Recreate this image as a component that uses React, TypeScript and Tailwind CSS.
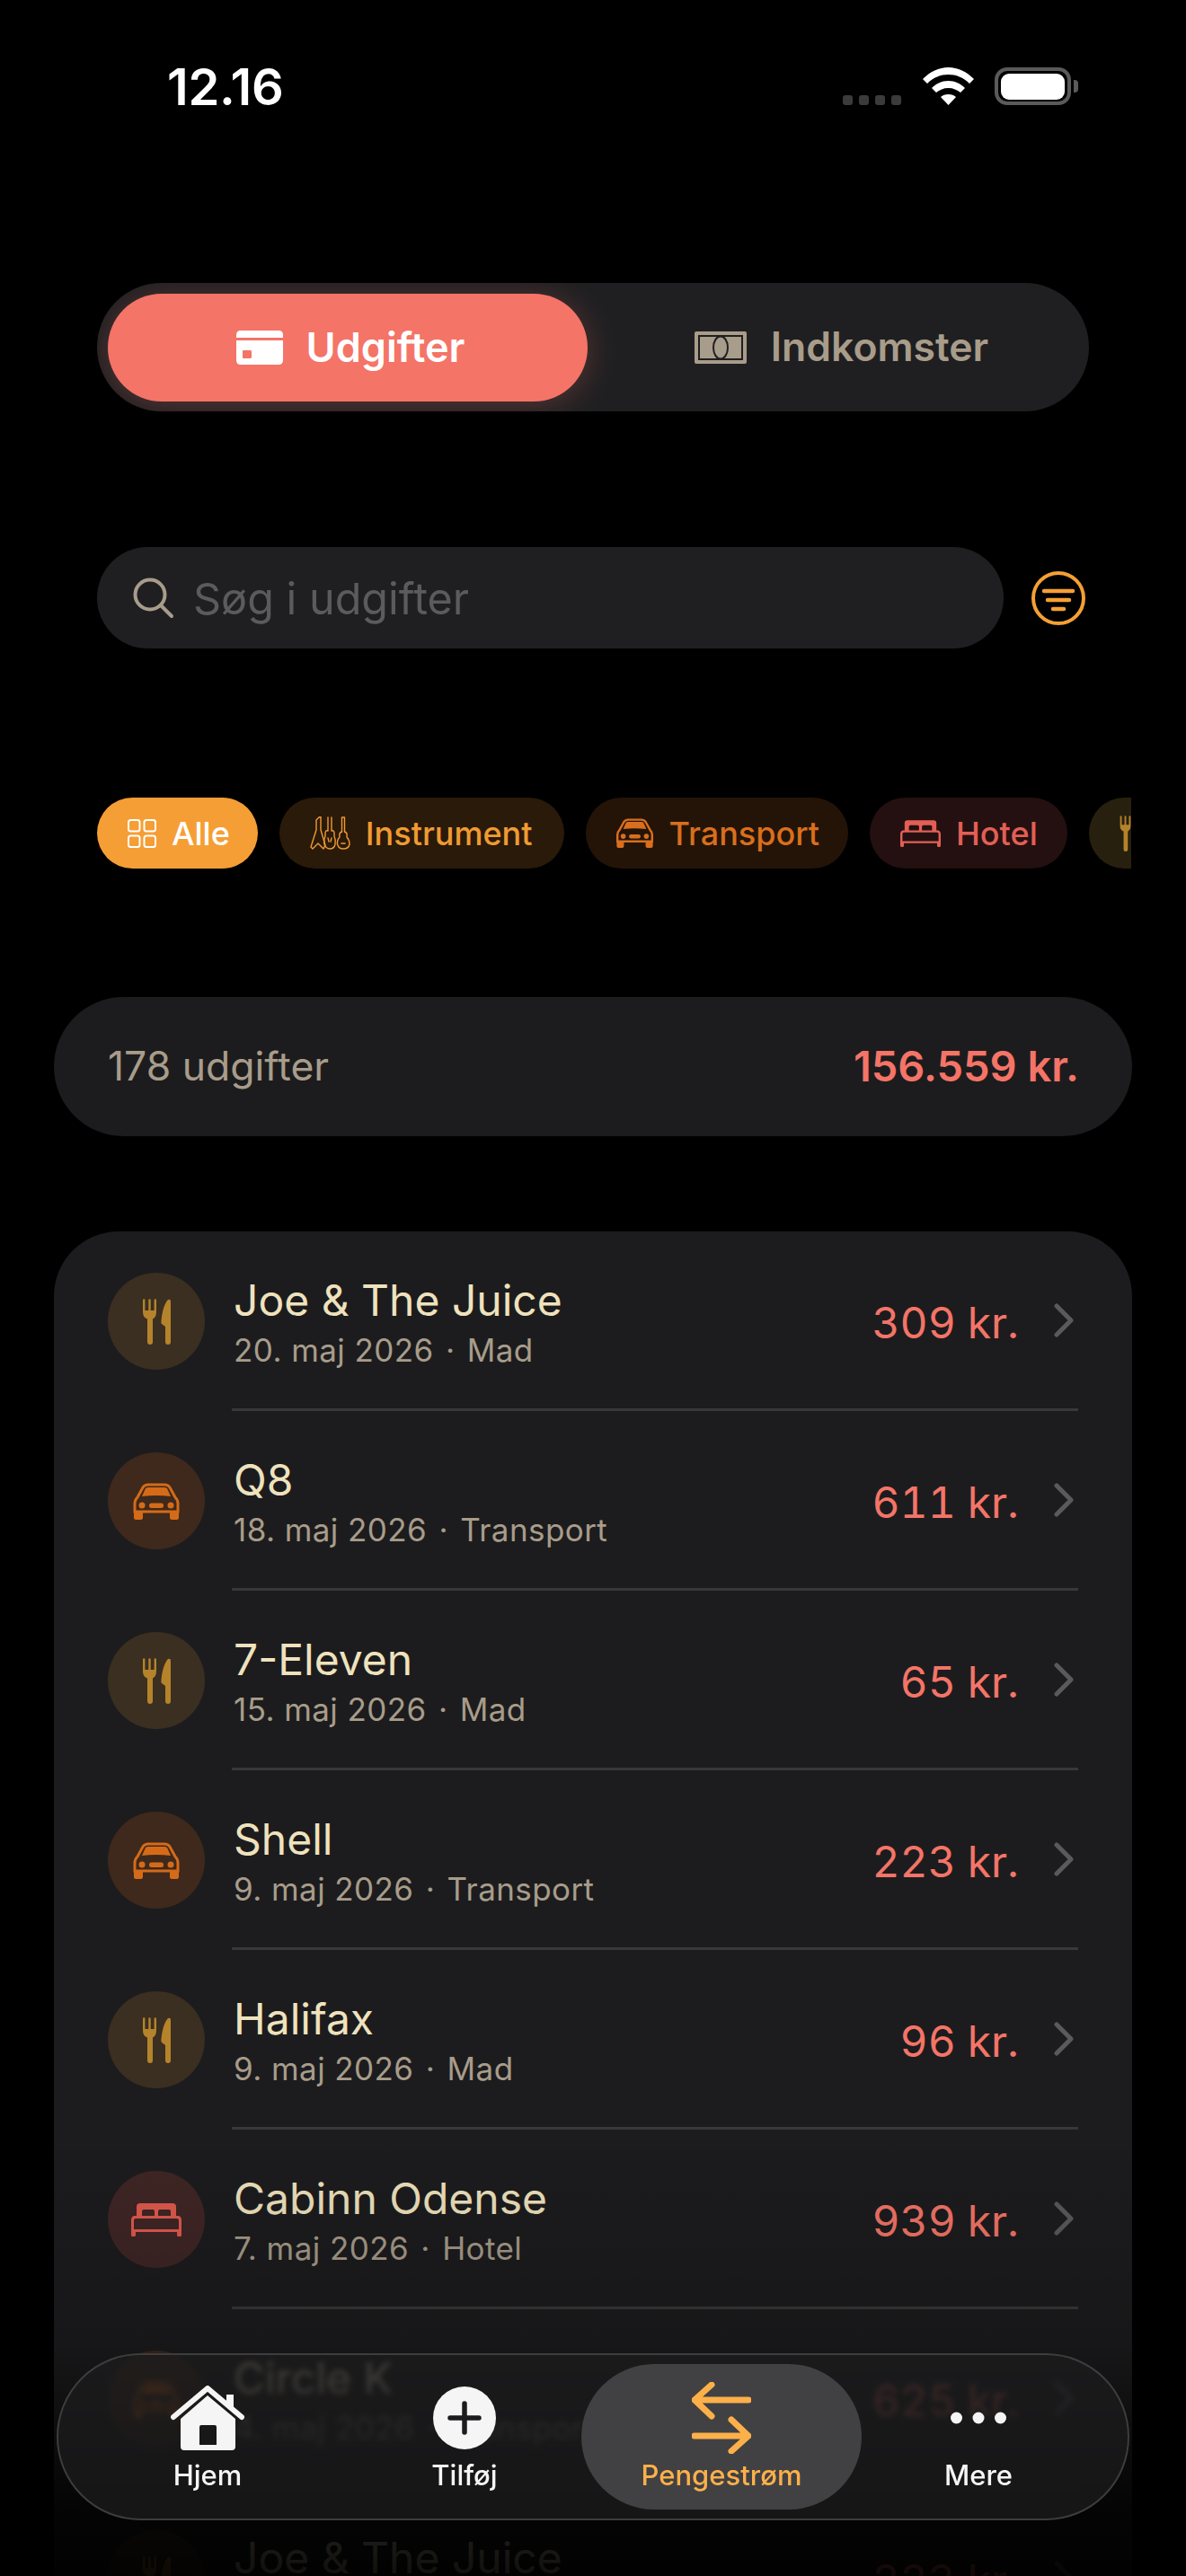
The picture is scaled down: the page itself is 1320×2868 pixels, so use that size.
import React from "react";

type IconProps = { w: number; h: number; c: string };

const Fork = ({ w, h, c }: IconProps) => (
  <svg width={w} height={h} viewBox="0 0 15 51" fill={c}>
    <path d="M0 1.5a1.2 1.2 0 0 1 2.4 0V13H6.3V1.5a1.2 1.2 0 0 1 2.4 0V13h3.9V1.5a1.2 1.2 0 0 1 2.4 0V15c0 4-2 6.5-4 7.5V48a3 3 0 0 1-6 0V22.5c-3-1-5-3.5-5-7.5Z" />
  </svg>
);

const ForkKnife = ({ w, h, c }: IconProps) => (
  <svg width={w} height={h} viewBox="0 0 31 51" fill={c}>
    <path d="M0 1.5a1.2 1.2 0 0 1 2.4 0V13H6.3V1.5a1.2 1.2 0 0 1 2.4 0V13h3.9V1.5a1.2 1.2 0 0 1 2.4 0V15c0 4-2 6.5-4 7.5V48a3 3 0 0 1-6 0V22.5c-3-1-5-3.5-5-7.5Z" />
    <path d="M28 1Q31 0 31 3V48a3 3 0 0 1-6 0V31L21 28Q20 27 20.5 24C21.5 14 24 5 28 1Z" />
  </svg>
);

const Car = ({ w, h, c }: IconProps) => (
  <svg width={w} height={h} viewBox="0 0 52 41" fill={c}>
    <path d="M5 16 11 5Q13 2 17 2H35Q39 2 41 5L47 16Q50 19 50 23V32H2V23Q2 19 5 16Z" fill="none" stroke={c} strokeWidth="3" />
    <path d="M10 15 14 6Q15 5 17 5H35Q37 5 38 6L42 15Q26 13 10 15Z" />
    <circle cx="10" cy="25" r="3.5" />
    <circle cx="42" cy="25" r="3.5" />
    <rect x="18" y="22.5" width="16" height="5.5" rx="2.5" />
    <rect x="1" y="31" width="10" height="10" rx="2.5" />
    <rect x="41" y="31" width="10" height="10" rx="2.5" />
  </svg>
);

const Bed = ({ w, h, c }: IconProps) => (
  <svg width={w} height={h} viewBox="0 0 56 37" fill={c} fillRule="evenodd">
    <path d="M10 0H46Q50 0 50 4V14H53Q56 15 56 19V35a2 2 0 0 1-5 0V32H5V35a2 2 0 0 1-5 0V19Q0 15 3 14H6V4Q6 0 10 0ZM14 7Q12 7 12 9V14H26V9Q26 7 24 7ZM32 7Q30 7 30 9V14H44V9Q44 7 42 7ZM5 17Q3 17 3 19V29H53V19Q53 17 51 17Z" />
  </svg>
);

const Guitars = ({ w, h, c }: IconProps) => (
  <svg width={w} height={h} viewBox="0 0 45 37" fill="none" stroke={c} strokeWidth="1.4" strokeLinejoin="round" strokeLinecap="round">
    <path d="M10 1 7 4V15L1 34 3 36 9 30 15 36 17 32 12 15V0Z" />
    <path d="M20 1V16M24 1V16M20 16Q17 15 17 19V22Q15 26 16 31 18 36 22 36 27 36 28 31 29 26 27 22V19Q27 15 24 16" />
    <path d="M20 24 21 28M24 24 23 28" />
    <path d="M35.5 1H38.5V17M35.5 1V17" />
    <path d="M35.5 17Q32 18 33 23 30 26 30.5 31 32 36 37 36 43 36 44 31 44 26 41 23 42 18 38.5 17" />
    <path d="M35 30H39" strokeWidth="1.6" />
  </svg>
);

const Grid = ({ w, h, c }: IconProps) => (
  <svg width={w} height={h} viewBox="0 0 32 32" fill="none" stroke={c} strokeWidth="2">
    <rect x="1" y="1" width="12.5" height="12.5" rx="2.5" />
    <rect x="18.5" y="1" width="12.5" height="12.5" rx="2.5" />
    <rect x="1" y="18.5" width="12.5" height="12.5" rx="2.5" />
    <rect x="18.5" y="18.5" width="12.5" height="12.5" rx="2.5" />
  </svg>
);

const cats = {
  Mad: { Icon: ForkKnife, color: "#b5832c", bg: "bg-[#3a2f20]", w: 31, h: 51 },
  Transport: { Icon: Car, color: "#d56b18", bg: "bg-[#3e291c]", w: 52, h: 41 },
  Hotel: { Icon: Bed, color: "#e05a4e", bg: "bg-[#3f2625]", w: 56, h: 37 },
};

const rows: { name: string; date?: string; cat: keyof typeof cats; amount: number }[] = [
  { name: "Joe & The Juice", date: "20. maj 2026", cat: "Mad", amount: 309 },
  { name: "Q8", date: "18. maj 2026", cat: "Transport", amount: 611 },
  { name: "7-Eleven", date: "15. maj 2026", cat: "Mad", amount: 65 },
  { name: "Shell", date: "9. maj 2026", cat: "Transport", amount: 223 },
  { name: "Halifax", date: "9. maj 2026", cat: "Mad", amount: 96 },
  { name: "Cabinn Odense", date: "7. maj 2026", cat: "Hotel", amount: 939 },
  { name: "Circle K", date: "4. maj 2026", cat: "Transport", amount: 625 },
  { name: "Joe & The Juice", cat: "Mad", amount: 223 },
];

function Row({ r }: { r: (typeof rows)[number] }) {
  const cat = cats[r.cat];
  return (
    <div className="relative flex h-[200px] items-center pl-[60px] pr-[60px]">
      <div className={`flex h-[108px] w-[108px] shrink-0 items-center justify-center rounded-full ${cat.bg}`}>
        <cat.Icon w={cat.w} h={cat.h} c={cat.color} />
      </div>
      <div className="ml-[30px] flex h-full flex-1 items-center border-b-[3px] border-[#38383a]">
        <div className="flex-1 pl-[2px] pt-[6px]">
          <div className="text-[48px] leading-[60px] text-[#efe2bd]">{r.name}</div>
          <div className="text-[35px] leading-[50px] tracking-[0.012em] text-[#a89c8a]">
            {r.date ? (
              <>
                {r.date} <span className="mx-[3px]">·</span> {r.cat}
              </>
            ) : (
              "\u00a0"
            )}
          </div>
        </div>
        <div className="pt-[6px] text-[48px] tabular-nums text-[#f47467]">{r.amount} kr.</div>
        <svg className="ml-[39px] mr-[5px]" width="22" height="38" viewBox="0 0 22 38" fill="none" stroke="#5a5a5e" strokeWidth="5" strokeLinecap="round" strokeLinejoin="round">
          <path d="M3 3 19 19 3 35" />
        </svg>
      </div>
    </div>
  );
}

function Chip({ bg, text, label, icon, pad = "px-[32px]" }: { bg: string; text?: string; label?: string; icon: React.ReactNode; pad?: string }) {
  return (
    <div className={`flex h-[79px] shrink-0 items-center rounded-full ${pad} ${bg}`}>
      {icon}
      {label ? <span className={`ml-[17px] text-[36px] font-medium ${text}`}>{label}</span> : null}
    </div>
  );
}

function NavItem({ label, icon, active }: { label: string; icon: React.ReactNode; active?: boolean }) {
  return (
    <div className={`flex flex-col items-center rounded-full pt-[20px] ${active ? "-mx-[13px] bg-[#414143] text-[#fcb04a]" : "text-[#f5f5f5]"}`}>
      <div className="flex h-[80px] items-center justify-center">{icon}</div>
      <span className="mt-[4px] text-[31px] font-medium leading-[40px]">{label}</span>
    </div>
  );
}

export default function App() {
  return (
    <div className="relative h-[2868px] w-[1320px] overflow-hidden bg-black font-['Inter',sans-serif]">
      {/* status bar */}
      <div className="flex h-[315px] items-start justify-between pl-[186px] pr-[120px] pt-[65px]">
        <div className="text-[56px] font-semibold leading-[64px] tracking-[-0.005em] text-white">12.16</div>
        <div className="flex items-start pt-[10px]">
          <div className="mt-[31px] flex gap-[7px]">
            <div className="h-[11px] w-[11px] rounded-[3px] bg-[#3b3b3b]" />
            <div className="h-[11px] w-[11px] rounded-[3px] bg-[#3b3b3b]" />
            <div className="h-[11px] w-[11px] rounded-[3px] bg-[#3b3b3b]" />
            <div className="h-[11px] w-[11px] rounded-[3px] bg-[#3b3b3b]" />
          </div>
          <svg className="ml-[24px]" width="57" height="42" viewBox="0 0 57 42" fill="#fff">
            <path d="M0 13C8 5 18 0 28.5 0 39 0 49 5 57 13L52 18C45 11 37 8 28.5 8 20 8 12 11 5 18Z" />
            <path d="M10 23C15 18 21 15 28.5 15 36 15 42 18 47 23L42 28C38 25 34 23 28.5 23 23 23 19 25 15 28Z" />
            <path d="M20 33C22 31 25 30 28.5 30 32 30 35 31 37 33L28.5 42Z" />
          </svg>
          <div className="ml-[23px] flex h-[42px] w-[85px] items-center justify-center rounded-[14px] border-[4px] border-[#5a5a5a]">
            <div className="h-[29px] w-[71px] rounded-[9px] bg-white" />
          </div>
          <div className="ml-[3px] mt-[14px] h-[14px] w-[5px] rounded-r-[4px] bg-[#5a5a5a]" />
        </div>
      </div>

      {/* segmented */}
      <div className="mx-[108px] flex h-[143px] w-[1104px] items-center overflow-hidden rounded-full bg-[#1f1f21] pl-[12px]">
        <div className="flex h-[120px] w-[534px] shrink-0 items-center justify-center rounded-full bg-[#f47467] pl-[6px] shadow-[0_4px_36px_rgba(244,116,103,0.28)]">
          <svg width="52" height="38" viewBox="0 0 52 38" fill="#fff" fillRule="evenodd">
            <path d="M5 0H47Q52 0 52 5V8H0V5Q0 0 5 0ZM0 11H52V33Q52 38 47 38H5Q0 38 0 33ZM8 22Q7 22 7 23V30Q7 31 8 31H15Q17 31 17 30V23Q17 22 15 22Z" />
          </svg>
          <span className="ml-[26px] text-[45px] font-semibold text-white">Udgifter</span>
        </div>
        <div className="flex flex-1 items-center justify-center pl-[7px]">
          <svg width="58" height="36" viewBox="0 0 58 36">
            <rect width="58" height="36" rx="2" fill="#a89c8a" />
            <rect x="5" y="5" width="48" height="26" fill="none" stroke="#1f1f21" strokeWidth="2" />
            <ellipse cx="29" cy="18" rx="8" ry="12.5" fill="none" stroke="#1f1f21" strokeWidth="2" />
          </svg>
          <span className="ml-[27px] text-[44.5px] font-semibold text-[#a89c8a]">Indkomster</span>
        </div>
      </div>

      {/* search */}
      <div className="mx-[108px] mt-[151px] flex items-center">
        <div className="flex h-[113px] w-[1009px] items-center rounded-full bg-[#1f1f21] pl-[40px]">
          <svg width="46" height="46" viewBox="0 0 46 46" fill="none" stroke="#a89c8a" strokeWidth="4" strokeLinecap="round">
            <circle cx="19" cy="19" r="16.5" />
            <path d="M31 31 43 43" />
          </svg>
          <span className="ml-[21px] pt-[3px] text-[48.5px] text-[#5b5b5d]">Søg i udgifter</span>
        </div>
        <svg className="ml-[31px]" width="60" height="60" viewBox="0 0 60 60" fill="none" stroke="#f5a034" strokeLinecap="round">
          <circle cx="30" cy="30" r="28" strokeWidth="4" />
          <path d="M14 22H46M18 32H42M24 42H36" strokeWidth="4.5" />
        </svg>
      </div>

      {/* chips */}
      <div className="ml-[108px] mt-[166px] flex w-[1151px] gap-[24px] overflow-hidden">
        <Chip bg="bg-[#f59e35]" text="text-white" label="Alle" pad="pl-[34px] pr-[31px]" icon={<Grid w={32} h={32} c="#fff" />} />
        <Chip bg="bg-[#2a1a0a]" text="text-[#f09a33]" label="Instrument" pad="pl-[34px] pr-[35px]" icon={<Guitars w={45} h={37} c="#f09a33" />} />
        <Chip bg="bg-[#241408]" text="text-[#d96f1d]" label="Transport" pad="pl-[33px] pr-[32px]" icon={<Car w={43} h={33} c="#d96f1d" />} />
        <Chip bg="bg-[#241010]" text="text-[#e35f55]" label="Hotel" pad="pl-[34px] pr-[33px]" icon={<Bed w={45} h={30} c="#e35f55" />} />
        <Chip bg="bg-[#28200f]" pad="pl-[34px] pr-[60px]" icon={<Fork w={13} h={40} c="#b5832c" />} />
      </div>

      {/* summary */}
      <div className="mx-[60px] mt-[143px] flex h-[155px] items-center justify-between rounded-full bg-[#1c1c1e] pl-[60px] pr-[59px]">
        <span className="text-[44.5px] text-[#a89c8a]">178 udgifter</span>
        <span className="text-[47px] font-semibold text-[#f47467]">156.559 kr.</span>
      </div>

      {/* list */}
      <div className="mx-[60px] mt-[106px] rounded-t-[72px] bg-[#1c1c1e]">
        {rows.map((r, i) => (
          <Row key={i} r={r} />
        ))}
      </div>

      {/* fade */}
      <div className="absolute inset-x-0 bottom-0 h-[500px] bg-[linear-gradient(to_bottom,rgba(0,0,0,0)_0%,rgba(0,0,0,0.18)_48%,rgba(0,0,0,0.85)_86%,rgba(0,0,0,0.93)_100%)]" />

      {/* nav */}
      <div className="absolute left-[63px] top-[2620px] grid h-[186px] w-[1194px] grid-cols-4 rounded-full border-2 border-[#3d3d3f] bg-[#1c1c1e]/75 px-[23px] py-[10px] backdrop-blur-[3px]">
        <NavItem
          label="Hjem"
          icon={
            <svg width="82" height="72" viewBox="0 0 82 72">
              <path d="M3 35 41 3 79 35" fill="none" stroke="#f5f5f5" strokeWidth="6" strokeLinecap="round" strokeLinejoin="round" />
              <rect x="62" y="10" width="8" height="14" fill="#f5f5f5" />
              <path fillRule="evenodd" fill="#f5f5f5" d="M41 11 72 37V68Q72 72 68 72H15Q11 72 11 68V37ZM34 44Q32 44 32 46V66H51V46Q51 44 49 44Z" />
            </svg>
          }
        />
        <NavItem
          label="Tilføj"
          icon={
            <svg width="70" height="70" viewBox="0 0 70 70">
              <circle cx="35" cy="35" r="35" fill="#f5f5f5" />
              <path d="M19 35H51M35 19V51" stroke="#1c1c1e" strokeWidth="5.5" strokeLinecap="round" />
            </svg>
          }
        />
        <NavItem
          active
          label="Pengestrøm"
          icon={
            <svg width="66" height="80" viewBox="0 0 66 80" fill="none" stroke="#fcb04a" strokeWidth="7" strokeLinecap="round" strokeLinejoin="round">
              <path d="M63 20H4M22 3 3 20 22 38" />
              <path d="M3 60H62M44 42 63 60 44 77" />
            </svg>
          }
        />
        <NavItem
          label="Mere"
          icon={
            <svg width="62" height="14" viewBox="0 0 62 14" fill="#f5f5f5">
              <circle cx="6.5" cy="7" r="6.5" />
              <circle cx="31" cy="7" r="6.5" />
              <circle cx="55.5" cy="7" r="6.5" />
            </svg>
          }
        />
      </div>
    </div>
  );
}
